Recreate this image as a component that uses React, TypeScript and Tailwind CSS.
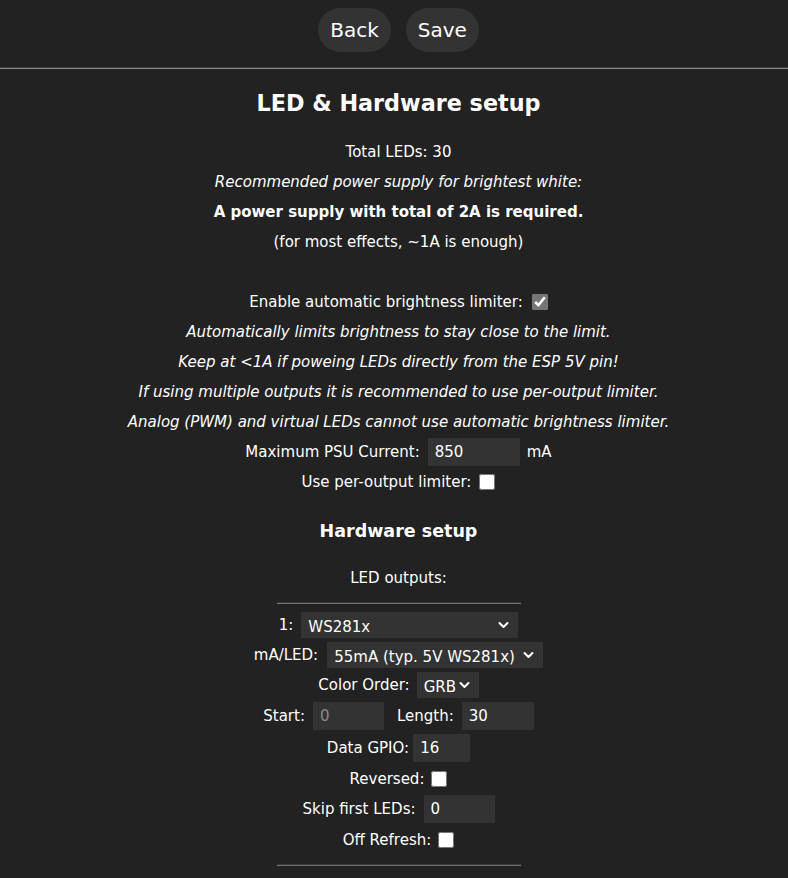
import React from 'react';

function Chevron() {
  return (
    <svg
      className="pointer-events-none absolute right-[9px] top-1/2 -translate-y-1/2"
      width="11"
      height="7"
      viewBox="0 0 11 7"
      fill="none"
    >
      <path d="M1.5 1.5l4 4 4-4" stroke="#fff" strokeWidth="2" strokeLinecap="round" strokeLinejoin="round" />
    </svg>
  );
}

function Select({ value, w }: { value: string; w: string }) {
  return (
    <span className="relative inline-flex">
      <select
        defaultValue={value}
        className={`${w} h-[26px] appearance-none bg-[#333] pl-[7px] text-white outline-none`}
      >
        <option>{value}</option>
      </select>
      <Chevron />
    </span>
  );
}

function Field({ value, w, dim }: { value: string; w: string; dim?: boolean }) {
  return (
    <input
      readOnly
      defaultValue={value}
      className={`${w} h-[28px] bg-[#333] px-[7px] outline-none ${dim ? 'text-[#8a8a8a]' : 'text-white'}`}
    />
  );
}

function Check({ on }: { on?: boolean }) {
  return (
    <input
      type="checkbox"
      defaultChecked={on}
      className="m-0 h-4 w-4 accent-[#767676]"
    />
  );
}

function Rule() {
  return <div className="mx-auto w-[244px] border-t border-b border-t-[#3a3a3a] border-b-[#707070]" />;
}

export default function App() {
  return (
    <div className="min-h-screen bg-[#222] text-center font-['DejaVu_Sans',Verdana,sans-serif] text-[15px] leading-[30px] text-white">
      <div className="flex justify-center gap-[15px] pt-2 pb-[15px] pl-[9px]">
        <button className="h-[44px] rounded-[22px] bg-[#333] px-3 text-[20px]">Back</button>
        <button className="h-[44px] rounded-[22px] bg-[#333] px-3 text-[20px]">Save</button>
      </div>
      <div className="border-t border-b border-t-[#3a3a3a] border-b-[#8a8a8a]" />

      <div className="pl-[9px]">
        <h2 className="mt-[19px] text-[22.3px] font-bold leading-[30px]">LED &amp; Hardware setup</h2>

        <div className="mt-[19px]">
          <div>Total LEDs: 30</div>
          <div className="italic">Recommended power supply for brightest white:</div>
          <div className="font-bold">A power supply with total of 2A is required.</div>
          <div>(for most effects, ~1A is enough)</div>

          <div className="mt-[30px] flex h-[30px] items-center justify-center gap-[9px]">
            <span>Enable automatic brightness limiter:</span>
            <Check on />
          </div>
          <div className="italic">Automatically limits brightness to stay close to the limit.</div>
          <div className="italic">Keep at &lt;1A if poweing LEDs directly from the ESP 5V pin!</div>
          <div className="italic">If using multiple outputs it is recommended to use per-output limiter.</div>
          <div className="italic">Analog (PWM) and virtual LEDs cannot use automatic brightness limiter.</div>
          <div className="flex h-[30px] items-center justify-center gap-2">
            <span>Maximum PSU Current:</span>
            <Field value="850" w="w-[92px]" />
            <span className="ml-[-1px]">mA</span>
          </div>
          <div className="flex h-[30px] items-center justify-center gap-[8px]">
            <span>Use per-output limiter:</span>
            <Check />
          </div>
        </div>

        <h3 className="mt-[19px] text-[17.5px] font-bold leading-[30px]">Hardware setup</h3>
        <div className="mt-[17px]">LED outputs:</div>

        <div className="mt-[9px]">
          <Rule />
        </div>

        <div className="mt-[6px]">
          <div className="flex h-[30px] items-center justify-center gap-2">
            <span>1:</span>
            <Select value="WS281x" w="w-[217px]" />
          </div>
          <div className="flex h-[30px] items-center justify-center gap-[9px]">
            <span>mA/LED:</span>
            <Select value="55mA (typ. 5V WS281x)" w="w-[216px]" />
          </div>
          <div className="flex h-[30px] items-center justify-center gap-[7px]">
            <span>Color Order:</span>
            <Select value="GRB" w="w-[62px]" />
          </div>
          <div className="flex h-[32px] items-center justify-center gap-2">
            <span>Start:</span>
            <Field value="0" w="w-[71px]" dim />
            <span className="ml-[5px]">Length:</span>
            <Field value="30" w="w-[72px]" />
          </div>
          <div className="flex h-[32px] items-center justify-center gap-[4px]">
            <span>Data GPIO:</span>
            <Field value="16" w="w-[57px]" />
          </div>
          <div className="flex h-[30px] items-center justify-center gap-[7px]">
            <span>Reversed:</span>
            <Check />
          </div>
          <div className="flex h-[30px] items-center justify-center gap-2">
            <span>Skip first LEDs:</span>
            <Field value="0" w="w-[71px]" />
          </div>
          <div className="flex h-[32px] items-center justify-center gap-[7px]">
            <span>Off Refresh:</span>
            <Check />
          </div>
        </div>

        <div className="mt-[8px]">
          <Rule />
        </div>
      </div>
    </div>
  );
}
